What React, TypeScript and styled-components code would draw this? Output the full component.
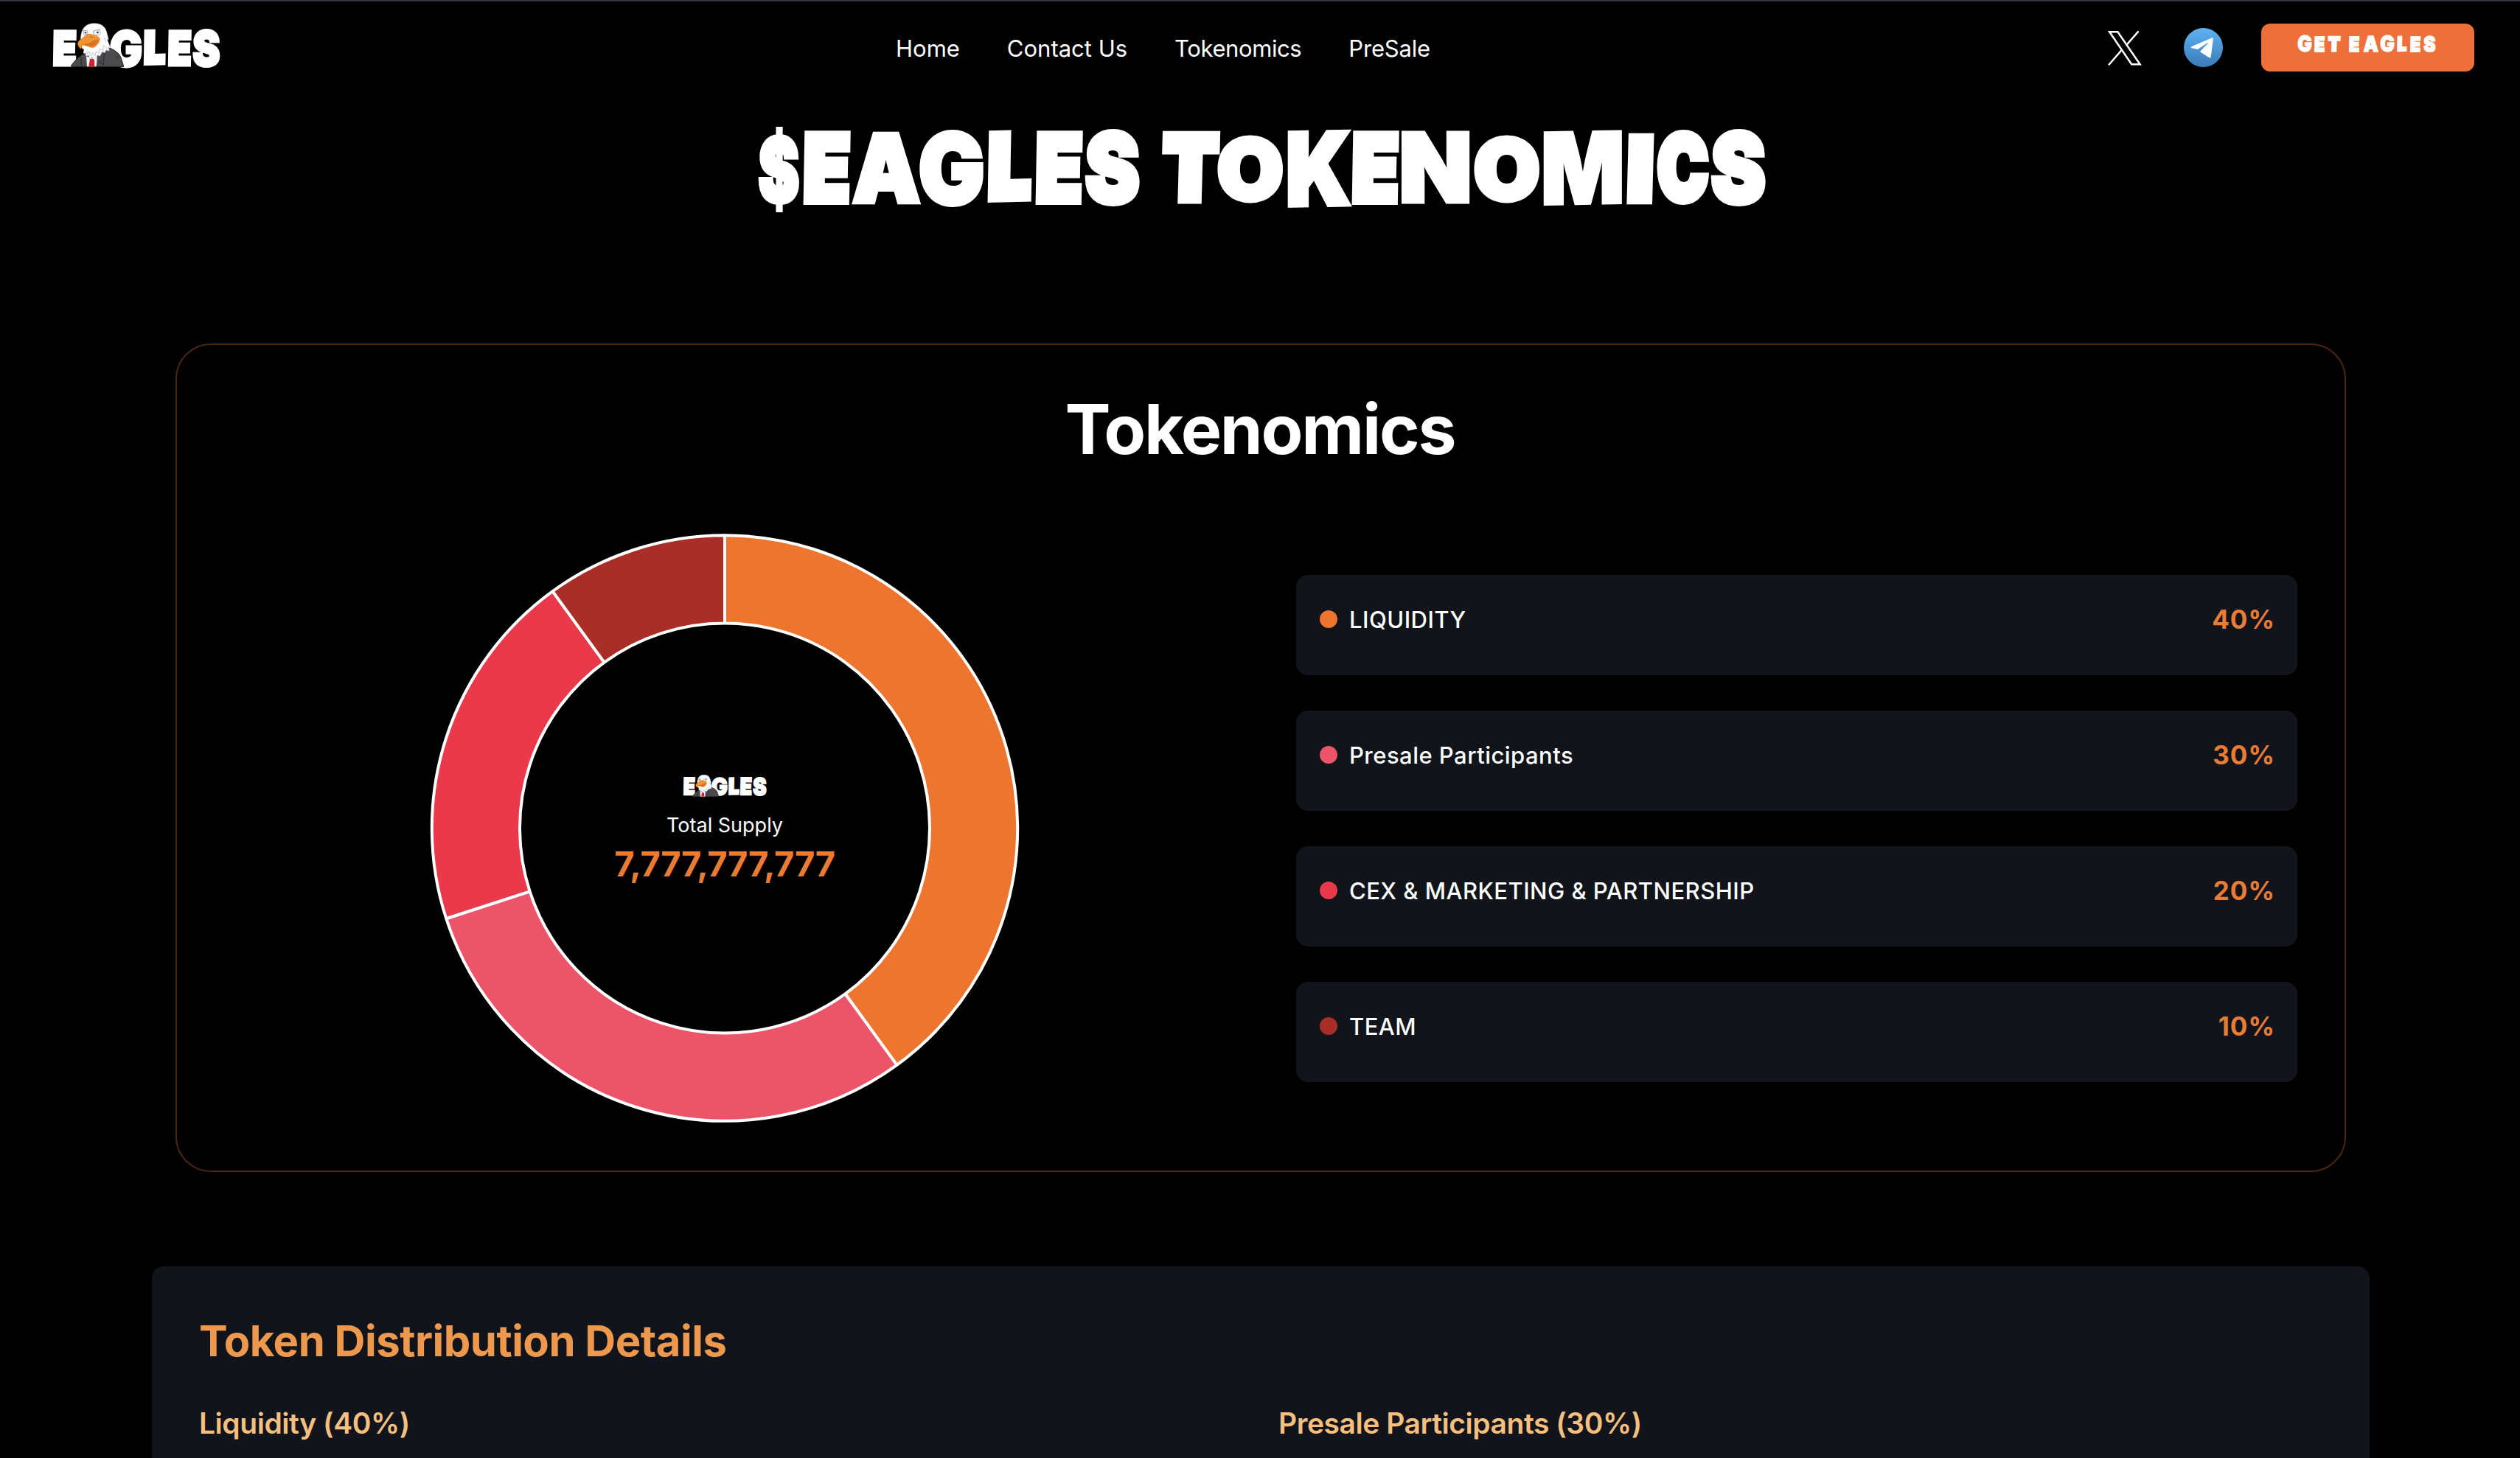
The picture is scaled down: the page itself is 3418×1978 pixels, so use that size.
import React from 'react';
import styled, { createGlobalStyle } from 'styled-components';

const GlobalStyle = createGlobalStyle`
  *, *::before, *::after { box-sizing: border-box; }
  html, body { margin: 0; background: #000; }
  body {
    height: 1978px;
    overflow: hidden;
    color: #fff;
    font-family: Inter, "Liberation Sans", sans-serif;
  }
  h1, h2, h3, p, ul { margin: 0; padding: 0; }
`;

/* ---------- Brush lettering ---------- */

interface Glyph {
  /** ink box of the font glyph, in 1/100 em */
  left: number;
  right: number;
  up: number;
  down: number;
  /** drawn box, in 1/100 em: width, top above the baseline, bottom below it */
  width: number;
  top: number;
  bottom: number;
  after: number;
  lean?: number;
  rise?: number;
  stroke?: number;
}

const GLYPHS: Record<string, Glyph> = {
  $: { left: 2, right: 64, up: 83, down: 10, width: 56, top: 109, bottom: 10, after: 6, stroke: 5 },
  E: { left: 4, right: 58, up: 73, down: 0, width: 64, top: 102, bottom: -1, after: 2, lean: -1, stroke: 8 },
  A: { left: 2, right: 78, up: 73, down: 0, width: 93, top: 101, bottom: -2, after: -2, stroke: 5 },
  G: { left: 3, right: 72, up: 74, down: 1, width: 87, top: 104, bottom: 2, after: 6, stroke: 4.5 },
  L: { left: 4, right: 54, up: 73, down: 0, width: 60, top: 102, bottom: -4, after: 5, lean: -1, rise: -1.5 },
  S: { left: 2, right: 64, up: 74, down: 1, width: 75, top: 104, bottom: 1, after: 0, stroke: 6 },
  T: { left: 2, right: 66, up: 73, down: 0, width: 79, top: 101, bottom: -2, after: -3, lean: -1.5 },
  O: { left: 3, right: 75, up: 74, down: 1, width: 90, top: 95, bottom: -3, after: 4.5, stroke: 6 },
  K: { left: 4, right: 74, up: 73, down: 0, width: 86, top: 102, bottom: 3, after: 2, rise: -1, stroke: 5 },
  N: { left: 4, right: 73, up: 73, down: 0, width: 94, top: 102, bottom: -2, after: 5, stroke: 4 },
  M: { left: 4, right: 91, up: 73, down: 0, width: 107, top: 101, bottom: 0, after: 7, rise: -1, stroke: 3 },
  I: { left: 4, right: 25, up: 73, down: 0, width: 36, top: 99, bottom: -2, after: 4, lean: -1.5 },
  C: { left: 3, right: 72, up: 74, down: 1, width: 71, top: 103, bottom: -1, after: 2, stroke: 8 },
  ' ': { left: 0, right: 20, up: 73, down: 0, width: 29, top: 80, bottom: 0, after: 0 },
};

const shape = (g: Glyph) => {
  const t = g.stroke ?? 11;
  const sx = g.width / (g.right - g.left + t);
  const sy = (g.top + g.bottom) / (g.up + g.down + t);
  const tx = (Math.tan(((g.lean ?? 0) * Math.PI) / 180) * g.top) / 2;
  const ty = g.bottom - (g.down + t / 2) * sy;
  return `translate(${tx / 100}em, ${ty / 100}em) skew(${g.lean ?? 0}deg, ${g.rise ?? 0}deg) scale(${sx}, ${sy}) translateX(${-(g.left - t / 2) / 100}em)`;
};

const BrushLine = styled.span<{ $size: number }>`
  display: flex;
  height: 1em;
  font: 900 ${(p) => p.$size}px/1 Inter, sans-serif;
  color: #fff;
`;

const BrushGlyph = styled.span<{ $glyph: Glyph; $tracking: number }>`
  flex: none;
  width: ${(p) => p.$glyph.width / 100}em;
  height: 1em;
  margin-right: ${(p) => (p.$glyph.after + p.$tracking) / 100}em;
  white-space: pre;
  transform-origin: 0 0.864em;
  transform: ${(p) => shape(p.$glyph)};
  -webkit-text-stroke: ${(p) => (p.$glyph.stroke ?? 11) / 100}em #fff;
`;

function Brush({ text, size, tracking = 0 }: { text: string; size: number; tracking?: number }) {
  return (
    <BrushLine $size={size}>
      {text.split('').map((ch, i) => (
        <BrushGlyph key={i} $glyph={GLYPHS[ch]} $tracking={tracking}>{ch}</BrushGlyph>
      ))}
    </BrushLine>
  );
}

/* ---------- Logo ---------- */

const LogoBox = styled.div<{ $size: number }>`
  position: relative;
  display: flex;
  gap: 0.87em;
  width: max-content;
  height: 1.2em;
  padding-top: 0.33em;
  font-size: ${(p) => p.$size}px;
`;

const Eagle = styled.svg`
  position: absolute;
  left: 0.486em;
  top: 0;
  width: 1.44em;
  height: 1.2em;
`;

function Logo({ size }: { size: number }) {
  return (
    <LogoBox $size={size}>
      <Brush text="E" size={size} />
      <Brush text="GLES" size={size} />
      <Eagle viewBox="168 92 216 180">
        <path d="M168 267 Q192 236 212 222 L240 214 L322 192 Q362 208 372 232 L384 271 L172 271Z" fill="#4b4b4d" stroke="#1b1b1d" strokeWidth="2.5" />
        <path d="M231 228 L262 238 L276 226 L272 270 L234 270Z" fill="#f4f4f6" />
        <path d="M246 238 L264 238 L265 270 L241 270Z" fill="#d9202b" />
        <path d="M209 226 L212 270 M306 206 L300 262 L286 252 L292 244 M352 238 L362 226" fill="none" stroke="#1f1f21" strokeWidth="2.5" />
        <path
          d="M262 94 C292 93 312 108 316 138 L322 160 L316 158 L324 180 L329 194 L321 193 L325 206 L312 203 L306 214 L296 210 L286 228 L278 223 L262 242 L255 232 L246 237 L240 224 L230 228 L228 216 L219 216 L222 200 L214 196 C206 170 207 146 213 128 C220 106 238 94 262 94Z"
          fill="#fdfdfe"
          stroke="#b9bcc6"
          strokeWidth="1.5"
        />
        <path d="M231 206 L236 218 L243 208 L250 226 L258 212 L266 228 L272 208 L284 216 L286 198 L300 204 L300 184 L316 196 M304 150 L312 172" fill="none" stroke="#c6c9d4" strokeWidth="3" />
        <path d="M218 122 L236 126 M258 126 L290 118" stroke="#8c8f98" strokeWidth="2.5" fill="none" />
        <ellipse cx="228" cy="132" rx="9" ry="9" fill="#f2f3f5" stroke="#8c8f98" strokeWidth="2" />
        <ellipse cx="274" cy="132" rx="15" ry="11" fill="#f2f3f5" stroke="#8c8f98" strokeWidth="2" />
        <circle cx="228" cy="132" r="3.6" fill="#26343a" />
        <circle cx="277" cy="131" r="4" fill="#26343a" />
        <path d="M232 140 Q250 134 262 142 Q286 146 286 160 Q284 176 266 190 Q254 196 240 188 L218 182 Q212 186 209 198 Q198 192 196 176 Q198 164 214 156Z" fill="#ee9530" stroke="#b9681c" strokeWidth="1.5" />
        <path d="M214 178 Q244 178 260 164 Q272 158 282 162 Q272 184 258 188 Q238 190 222 180Z" fill="#df6f26" />
        <path d="M246 150 q7 -3 12 2" fill="none" stroke="#a85a18" strokeWidth="2.5" />
      </Eagle>
    </LogoBox>
  );
}

/* ---------- Header ---------- */

const Page = styled.div`
  width: 3420px;
  height: 1978px;
  overflow: hidden;
  background: #000;
`;

const Header = styled.header`
  display: grid;
  grid-template-columns: 1143px 1fr auto;
  align-items: center;
  height: 128px;
  padding: 0 64px 0 72px;
  border-top: 2px solid #34343c;
`;

const LogoSlot = styled.div`
  padding-bottom: 8px;
`;

const Nav = styled.nav`
  display: flex;
  gap: 64px;
  padding-top: 2px;
`;

const NavLink = styled.a<{ $tracking?: number }>`
  font-size: 31px;
  line-height: 48px;
  letter-spacing: ${(p) => p.$tracking ?? 0}px;
`;

const Actions = styled.div`
  display: flex;
  align-items: center;
  align-self: start;
  gap: 52px;
  height: 125px;
`;

const XIcon = styled.svg`
  width: 52px;
  height: 52px;
`;

const TelegramIcon = styled.svg`
  width: 53px;
  height: 53px;
`;

const GetButton = styled.button`
  display: flex;
  justify-content: center;
  width: 289px;
  height: 65px;
  padding: 20px 2px 0 0;
  border: 0;
  border-radius: 12px;
  background: #ed6f39;
`;

/* ---------- Hero and chart card ---------- */

const Hero = styled.h1`
  display: flex;
  justify-content: center;
  height: 338px;
  padding: 65px 0 0 3px;
`;

const Card = styled.section`
  width: 2944px;
  height: 1124px;
  margin: 0 auto;
  padding: 60px 64px 0;
  border: 2px solid #4a270f;
  border-radius: 48px;
`;

const CardTitle = styled.h2`
  height: 196px;
  padding-right: 2px;
  text-align: center;
  font-size: 93px;
  font-weight: 700;
  line-height: 108px;
  letter-spacing: -2.2px;
`;

const Split = styled.div`
  display: grid;
  grid-template-columns: 1358px 1358px;
  column-gap: 96px;
  align-items: center;
  height: 800px;
`;

const ChartArea = styled.div`
  display: grid;
  place-items: center;
  & > * { grid-area: 1 / 1; }
`;

const Donut = styled.svg`
  width: 800px;
  height: 800px;
`;

const Center = styled.div`
  display: flex;
  flex-direction: column;
  align-items: center;
  margin-top: 7px;
`;

const SupplyLabel = styled.p`
  margin-top: 19px;
  font-size: 27px;
  line-height: 40px;
`;

const SupplyValue = styled.p`
  font-size: 47px;
  font-weight: 700;
  line-height: 64px;
  letter-spacing: -0.4px;
  color: #e97c35;
`;

const Legend = styled.ul`
  display: grid;
  row-gap: 48px;
  list-style: none;
`;

const LegendItem = styled.li`
  display: flex;
  align-items: flex-start;
  height: 136px;
  padding: 32px;
  border-radius: 16px;
  background: #11141b;
`;

const Dot = styled.span<{ $color: string }>`
  width: 24px;
  height: 24px;
  margin: 16px 16px 0 0;
  border-radius: 50%;
  background: ${(p) => p.$color};
`;

const LegendName = styled.span`
  flex: 1;
  padding-top: 1px;
  font-size: 31px;
  font-weight: 500;
  line-height: 56px;
  letter-spacing: 0.47px;
`;

const LegendShare = styled.span`
  margin-right: -2px;
  font-size: 35px;
  font-weight: 700;
  line-height: 56px;
  letter-spacing: 1px;
  color: #e97c35;
`;

/* ---------- Details ---------- */

const Details = styled.section`
  width: 3008px;
  height: 400px;
  margin: 128px auto 0;
  padding: 65px 64px 0;
  border-radius: 16px;
  background: #11141b;
`;

const DetailsTitle = styled.h2`
  font-size: 58px;
  font-weight: 700;
  line-height: 72px;
  letter-spacing: -0.49px;
  color: #ee984e;
`;

const DetailsGrid = styled.div`
  display: grid;
  grid-template-columns: 1fr 1fr;
  column-gap: 48px;
  margin-top: 48px;
`;

const DetailsHeading = styled.h3`
  font-size: 39px;
  font-weight: 600;
  line-height: 56px;
  letter-spacing: -0.45px;
  color: #f5bf7f;
`;

/* ---------- Data ---------- */

const SHARES = [
  { name: 'LIQUIDITY', share: 40, color: '#ed752f' },
  { name: 'Presale Participants', share: 30, color: '#ec5569' },
  { name: 'CEX & MARKETING & PARTNERSHIP', share: 20, color: '#ea394b' },
  { name: 'TEAM', share: 10, color: '#a82e27' },
];

const OUTER = 397.2;
const INNER = 278;

const at = (radius: number, percent: number) => {
  const a = (percent / 100) * Math.PI * 2;
  return `${(400 + radius * Math.sin(a)).toFixed(2)} ${(399.5 - radius * Math.cos(a)).toFixed(2)}`;
};

const SLICES = SHARES.map((s, i) => {
  const from = SHARES.slice(0, i).reduce((sum, x) => sum + x.share, 0);
  const to = from + s.share;
  return {
    color: s.color,
    d: `M${at(OUTER, from)} A${OUTER} ${OUTER} 0 0 1 ${at(OUTER, to)} L${at(INNER, to)} A${INNER} ${INNER} 0 0 0 ${at(INNER, from)}Z`,
  };
});

export default function App() {
  return (
    <>
      <GlobalStyle />
      <Page>
        <Header>
          <LogoSlot><Logo size={50} /></LogoSlot>
          <Nav>
            <NavLink>Home</NavLink>
            <NavLink>Contact Us</NavLink>
            <NavLink $tracking={-0.4}>Tokenomics</NavLink>
            <NavLink $tracking={-0.2}>PreSale</NavLink>
          </Nav>
          <Actions>
            <XIcon viewBox="0 0 52 52" fill="none" stroke="#fff" strokeWidth="2.5">
              <path d="M3.2 4.2H14.4L44.6 48.2H33.2Z" />
              <path d="M42.6 3.4L25.8 22.6M2 49.2L20 28.6" />
            </XIcon>
            <TelegramIcon viewBox="0 0 52 52">
              <defs>
                <linearGradient id="sky" x1="0" y1="0" x2="0" y2="1">
                  <stop offset="0" stopColor="#5fb2f2" />
                  <stop offset="1" stopColor="#3a7cb8" />
                </linearGradient>
              </defs>
              <circle cx="26" cy="26" r="26" fill="url(#sky)" />
              <path d="M10 24.8L37.6 13.1Q39.4 12.6 39.1 14.6L36 38.6Q35.6 40.6 33.8 39.6L22.4 32.2Q21.4 31.4 22.4 30.4L32.4 20.2Q32.4 19.3 31.4 19.8L18.4 28.4L10 26.4Q8.6 25.6 10 24.8Z" fill="#fff" />
            </TelegramIcon>
            <GetButton><Brush text="GET EAGLES" size={22} tracking={15} /></GetButton>
          </Actions>
        </Header>

        <Hero><Brush text="$EAGLES TOKENOMICS" size={100} /></Hero>

        <Card>
          <CardTitle>Tokenomics</CardTitle>
          <Split>
            <ChartArea>
              <Donut viewBox="0 0 800 800">
                {SLICES.map((s) => (
                  <path key={s.color} d={s.d} fill={s.color} stroke="#fff" strokeWidth="4" strokeLinejoin="bevel" />
                ))}
              </Donut>
              <Center>
                <Logo size={25} />
                <SupplyLabel>Total Supply</SupplyLabel>
                <SupplyValue>7,777,777,777</SupplyValue>
              </Center>
            </ChartArea>
            <Legend>
              {SHARES.map((s) => (
                <LegendItem key={s.name}>
                  <Dot $color={s.color} />
                  <LegendName>{s.name}</LegendName>
                  <LegendShare>{s.share}%</LegendShare>
                </LegendItem>
              ))}
            </Legend>
          </Split>
        </Card>

        <Details>
          <DetailsTitle>Token Distribution Details</DetailsTitle>
          <DetailsGrid>
            <DetailsHeading>Liquidity (40%)</DetailsHeading>
            <DetailsHeading>Presale Participants (30%)</DetailsHeading>
          </DetailsGrid>
        </Details>
      </Page>
    </>
  );
}
